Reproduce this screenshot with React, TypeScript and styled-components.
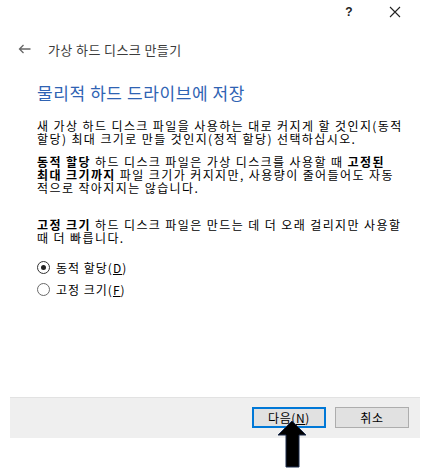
import { createGlobalStyle, styled } from "styled-components";

const GlobalStyle = createGlobalStyle`
  html, body {
    margin: 0;
    padding: 0;
    background: #ffffff;
  }
  body {
    font-family: "Noto Sans CJK KR", "Noto Sans", sans-serif;
    color: #000000;
  }
`;

const Dialog = styled.div`
  position: relative;
  width: 423px;
  height: 475px;
  display: flex;
  flex-direction: column;
  padding-bottom: 37px;
  box-sizing: border-box;
  overflow: hidden;
`;

const TitleBar = styled.div`
  height: 24px;
  display: flex;
  justify-content: flex-end;
  padding-right: 5px;
`;

const CaptionButton = styled.button`
  width: 46px;
  height: 24px;
  border: none;
  background: transparent;
  padding: 0;
  display: flex;
  align-items: center;
  justify-content: center;
  color: #222222;
  font-family: "Liberation Sans", sans-serif;
  font-size: 12px;
`;

const NavRow = styled.div`
  margin-top: 13px;
  height: 24px;
  display: flex;
  align-items: center;
  padding-left: 18px;
  gap: 17px;
  font-size: 13px;
  letter-spacing: 0.4px;
  color: #3c3c3c;
`;

const Content = styled.div`
  padding-left: 37px;
  display: flex;
  flex-direction: column;
`;

const Heading = styled.h1`
  margin: 22px 0 0;
  font-size: 17px;
  line-height: 20px;
  letter-spacing: 0.6px;
  font-weight: 400;
  color: #2f63b3;
`;

const Paragraph = styled.p<{ $gap: number }>`
  margin: ${(p) => p.$gap}px 0 0;
  font-size: 12px;
  line-height: 13px;
  letter-spacing: 1.4px;
  white-space: nowrap;

  & b {
    font-weight: 700;
  }
`;

const Options = styled.div`
  margin-top: 15px;
  display: flex;
  flex-direction: column;
  gap: 6px;
`;

const RadioRow = styled.label`
  display: flex;
  align-items: center;
  gap: 6px;
  height: 16px;
  font-size: 12px;
  letter-spacing: 1px;
`;

const RadioDot = styled.span<{ $checked: boolean }>`
  width: 11px;
  height: 11px;
  border-radius: 50%;
  border: 1px solid ${(p) => (p.$checked ? "#333333" : "#6a6a6a")};
  display: flex;
  align-items: center;
  justify-content: center;

  &::after {
    content: "";
    width: 5px;
    height: 5px;
    border-radius: 50%;
    background: #222222;
    display: ${(p) => (p.$checked ? "block" : "none")};
  }
`;

const Footer = styled.div`
  margin: auto 3px 0 10px;
  height: 41px;
  background: #efefef;
  border-top: 1px solid #e2e2e2;
  box-sizing: border-box;
  display: flex;
  justify-content: flex-end;
  align-items: flex-start;
  padding: 9px 11px 0 0;
  gap: 9px;
`;

const DialogButton = styled.button<{ $focused?: boolean }>`
  width: 74px;
  height: 21px;
  box-sizing: border-box;
  background: #e1e1e1;
  border: ${(p) => (p.$focused ? "2px solid #0078d7" : "1px solid #adadad")};
  font-family: "Noto Sans CJK KR", sans-serif;
  font-size: 12px;
  letter-spacing: 0.6px;
  color: #000000;
  padding: 0;
  display: flex;
  align-items: center;
  justify-content: center;
`;

const Pointer = styled.svg`
  position: absolute;
  left: 276px;
  top: 419px;
`;

export default function App() {
  return (
    <>
      <GlobalStyle />
      <Dialog>
        <TitleBar>
          <CaptionButton aria-label="help">
            <span style={{ fontWeight: 700 }}>?</span>
          </CaptionButton>
          <CaptionButton aria-label="close">
            <svg width="12" height="12" viewBox="0 0 12 12">
              <path d="M1 1 L11 11 M11 1 L1 11" stroke="#222" strokeWidth="1.1" />
            </svg>
          </CaptionButton>
        </TitleBar>

        <NavRow>
          <svg width="13" height="10" viewBox="0 0 13 10">
            <path
              d="M12.5 5 H1.5 M5.5 1 L1.5 5 L5.5 9"
              stroke="#666"
              strokeWidth="1.3"
              fill="none"
            />
          </svg>
          <span>가상 하드 디스크 만들기</span>
        </NavRow>

        <Content>
          <Heading>물리적 하드 드라이브에 저장</Heading>

          <Paragraph $gap={16}>
            새 가상 하드 디스크 파일을 사용하는 대로 커지게 할 것인지(동적
            <br />
            할당) 최대 크기로 만들 것인지(정적 할당) 선택하십시오.
          </Paragraph>

          <Paragraph $gap={10}>
            <b>동적 할당</b> 하드 디스크 파일은 가상 디스크를 사용할 때{" "}
            <b>고정된</b>
            <br />
            <b>최대 크기까지</b> 파일 크기가 커지지만, 사용량이 줄어들어도 자동
            <br />
            적으로 작아지지는 않습니다.
          </Paragraph>

          <Paragraph $gap={24}>
            <b>고정 크기</b> 하드 디스크 파일은 만드는 데 더 오래 걸리지만 사용할
            <br />때 더 빠릅니다.
          </Paragraph>

          <Options>
            <RadioRow>
              <RadioDot $checked />
              <span>
                동적 할당(<u>D</u>)
              </span>
            </RadioRow>
            <RadioRow>
              <RadioDot $checked={false} />
              <span>
                고정 크기(<u>F</u>)
              </span>
            </RadioRow>
          </Options>
        </Content>

        <Footer>
          <DialogButton $focused>
            다음(<u>N</u>)
          </DialogButton>
          <DialogButton>취소</DialogButton>
        </Footer>

        <Pointer width="32" height="50" viewBox="0 0 32 50">
          <path
            d="M16 2 L30 16 L23 16 L23 48 L10 48 L10 16 L2 16 Z"
            fill="#000"
            stroke="#1c2c4c"
            strokeWidth="1"
          />
        </Pointer>
      </Dialog>
    </>
  );
}
